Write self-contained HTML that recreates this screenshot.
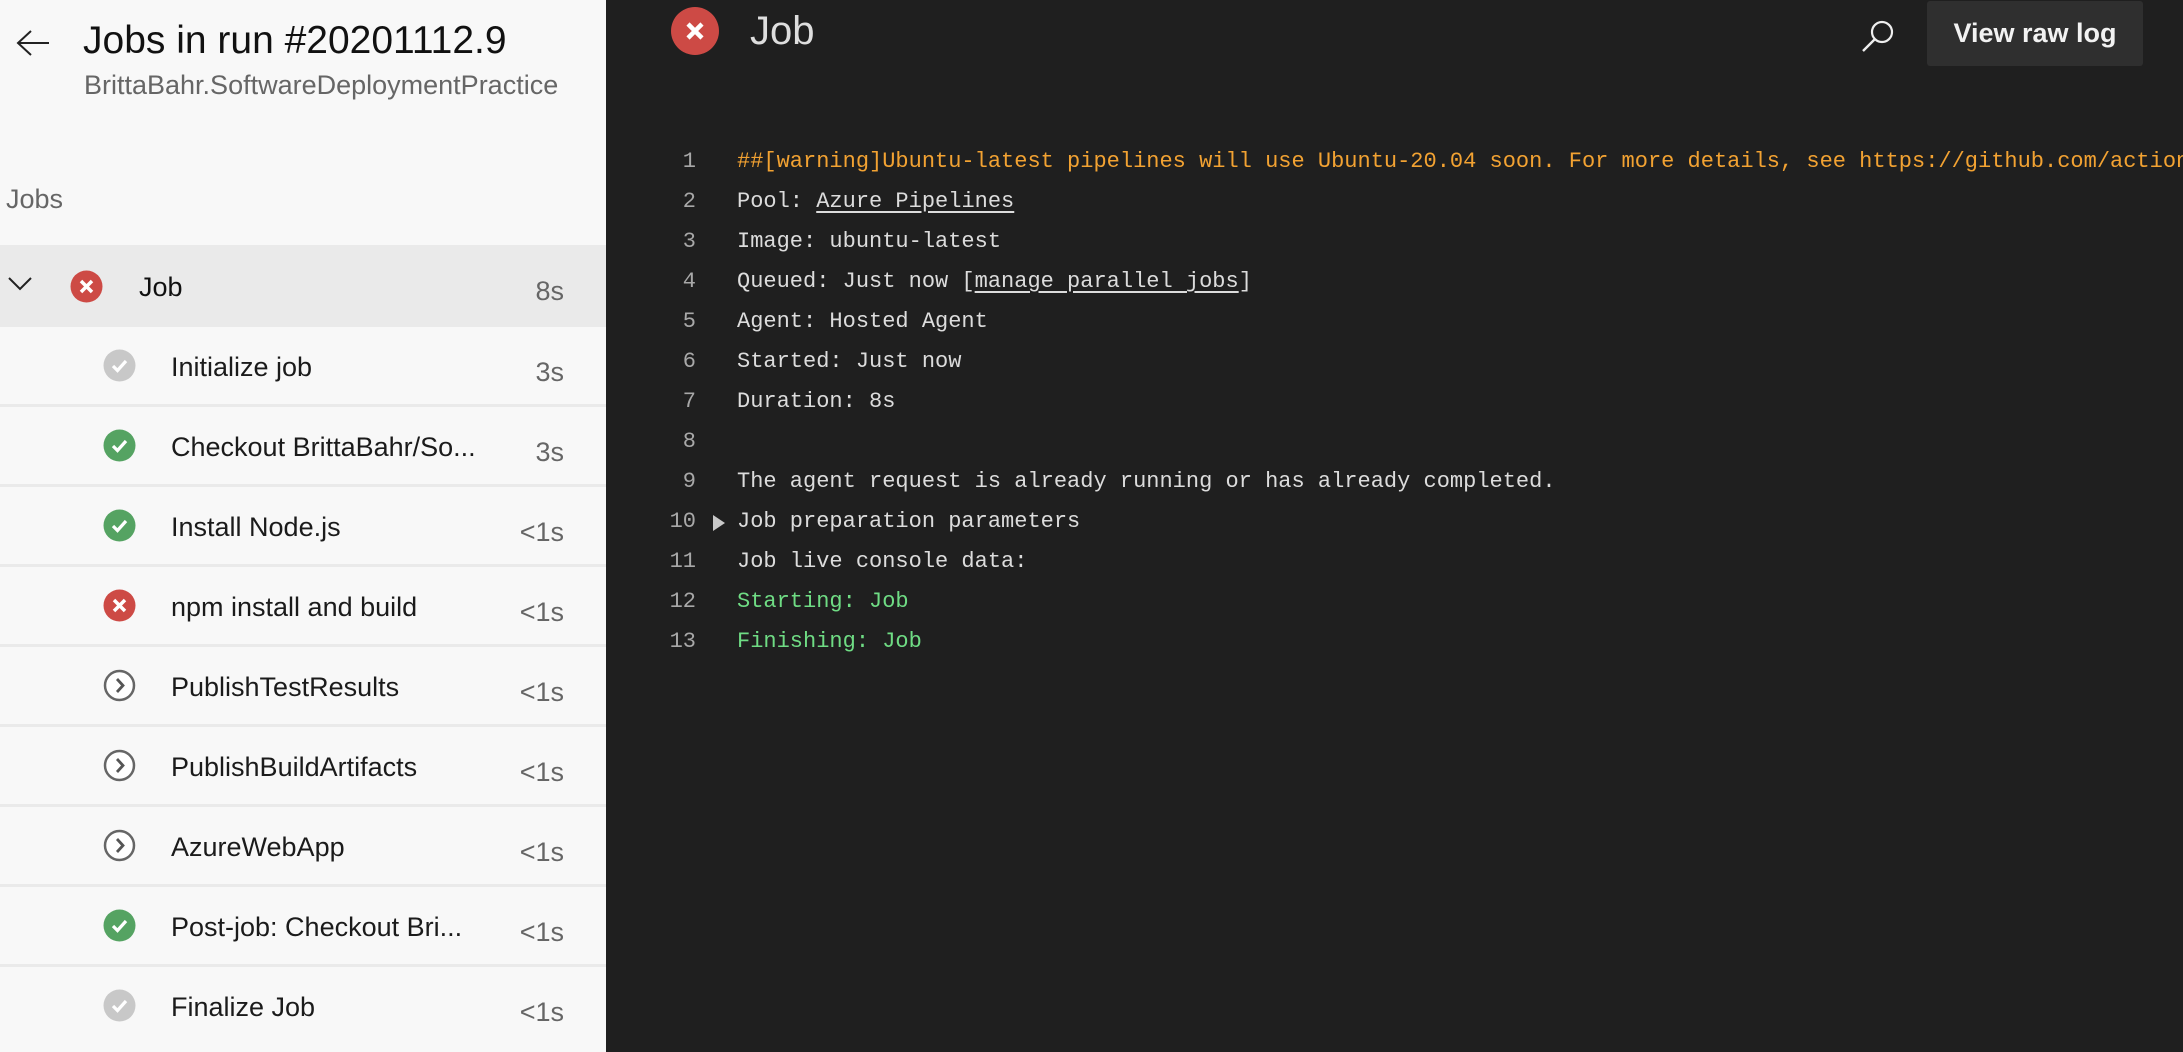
<!DOCTYPE html>
<html><head><meta charset="utf-8"><style>
*{margin:0;padding:0;box-sizing:border-box}
body{width:2183px;height:1052px;overflow:hidden;background:#1f1f1f;font-family:"Liberation Sans",sans-serif;position:relative}
#side{position:absolute;left:0;top:0;width:606px;height:1052px;background:#f8f8f8}
.abs{position:absolute;white-space:nowrap}
.row{position:absolute;left:0;width:606px;height:80px;border-top:3px solid #eaeaea}
.row .t{position:absolute;left:171px;top:25px;font-size:27px;color:#1b1b1b}
.row .d{position:absolute;right:42px;top:30px;font-size:27px;color:#666}
.row svg{position:absolute;left:103px;top:22px}
#main .ln{position:absolute;width:696px;left:0;text-align:right;font-family:"Liberation Mono",monospace;font-size:22px;color:#a8a8a8;padding-right:0}
#main .tx{position:absolute;left:737px;font-family:"Liberation Mono",monospace;font-size:22px;color:#dcdcdc;white-space:nowrap}
.u{text-decoration:underline;text-underline-offset:4px}
</style></head><body>
<div id="side">
<svg class="abs" style="left:15px;top:28px" width="36" height="30" viewBox="0 0 36 30"><path d="M16 3 L3 15 L16 27 M3 15 H34" fill="none" stroke="#222" stroke-width="2"/></svg>
<div class="abs" style="left:83px;top:19px;font-size:39px;color:#111">Jobs in run #20201112.9</div>
<div class="abs" style="left:84px;top:70px;font-size:27px;color:#666">BrittaBahr.SoftwareDeploymentPractice</div>
<div class="abs" style="left:6px;top:184px;font-size:27px;color:#666">Jobs</div>
<div class="abs" style="left:0;top:245px;width:606px;height:82px;background:#eaeaea"></div>
<svg class="abs" style="left:7px;top:275px" width="26" height="16"><path d="M2 3 L13 14 L24 3" fill="none" stroke="#222" stroke-width="2"/></svg>
<svg class="abs" style="left:70px;top:270px" width="33" height="33"><circle cx="16.5" cy="16.5" r="16" fill="#cd4a45"/><path d="M11 11 L22 22 M22 11 L11 22" stroke="#fff" stroke-width="3.5"/></svg>
<div class="abs" style="left:139px;top:272px;font-size:27px;color:#111">Job</div>
<div class="abs" style="right:42px;top:276px;font-size:27px;color:#666">8s</div>

<div class="row" style="top:324px"><svg width="33" height="33"><circle cx="16.5" cy="16.5" r="16" fill="#c8c8c8"/><path d="M10 17 L14.5 21.5 L23 12" fill="none" stroke="#fff" stroke-width="3.2"/></svg><div class="t">Initialize job</div><div class="d">3s</div></div>
<div class="row" style="top:404px"><svg width="33" height="33"><circle cx="16.5" cy="16.5" r="16" fill="#55a362"/><path d="M10 17 L14.5 21.5 L23 12" fill="none" stroke="#fff" stroke-width="3.2"/></svg><div class="t">Checkout BrittaBahr/So...</div><div class="d">3s</div></div>
<div class="row" style="top:484px"><svg width="33" height="33"><circle cx="16.5" cy="16.5" r="16" fill="#55a362"/><path d="M10 17 L14.5 21.5 L23 12" fill="none" stroke="#fff" stroke-width="3.2"/></svg><div class="t">Install Node.js</div><div class="d">&lt;1s</div></div>
<div class="row" style="top:564px"><svg width="33" height="33"><circle cx="16.5" cy="16.5" r="16" fill="#cd4a45"/><path d="M11 11 L22 22 M22 11 L11 22" stroke="#fff" stroke-width="3.5"/></svg><div class="t">npm install and build</div><div class="d">&lt;1s</div></div>
<div class="row" style="top:644px"><svg width="33" height="33"><circle cx="16.5" cy="16.5" r="14.5" fill="#fff" stroke="#666" stroke-width="2.5"/><path d="M14 10 L20 16.5 L14 23" fill="none" stroke="#555" stroke-width="2.8"/></svg><div class="t">PublishTestResults</div><div class="d">&lt;1s</div></div>
<div class="row" style="top:724px"><svg width="33" height="33"><circle cx="16.5" cy="16.5" r="14.5" fill="#fff" stroke="#666" stroke-width="2.5"/><path d="M14 10 L20 16.5 L14 23" fill="none" stroke="#555" stroke-width="2.8"/></svg><div class="t">PublishBuildArtifacts</div><div class="d">&lt;1s</div></div>
<div class="row" style="top:804px"><svg width="33" height="33"><circle cx="16.5" cy="16.5" r="14.5" fill="#fff" stroke="#666" stroke-width="2.5"/><path d="M14 10 L20 16.5 L14 23" fill="none" stroke="#555" stroke-width="2.8"/></svg><div class="t">AzureWebApp</div><div class="d">&lt;1s</div></div>
<div class="row" style="top:884px"><svg width="33" height="33"><circle cx="16.5" cy="16.5" r="16" fill="#55a362"/><path d="M10 17 L14.5 21.5 L23 12" fill="none" stroke="#fff" stroke-width="3.2"/></svg><div class="t">Post-job: Checkout Bri...</div><div class="d">&lt;1s</div></div>
<div class="row" style="top:964px"><svg width="33" height="33"><circle cx="16.5" cy="16.5" r="16" fill="#c8c8c8"/><path d="M10 17 L14.5 21.5 L23 12" fill="none" stroke="#fff" stroke-width="3.2"/></svg><div class="t">Finalize Job</div><div class="d">&lt;1s</div></div>
</div>

<div id="main">
<svg class="abs" style="left:671px;top:7px" width="48" height="48"><circle cx="24" cy="24" r="24" fill="#cd4a45"/><path d="M17 17 L31 31 M31 17 L17 31" stroke="#fff" stroke-width="4.5"/></svg>
<div class="abs" style="left:750px;top:9px;font-size:40px;color:#dedede">Job</div>
<svg class="abs" style="left:1858px;top:16px" width="40" height="40"><circle cx="24" cy="16" r="10" fill="none" stroke="#eee" stroke-width="2.2"/><path d="M17 23 L5 35" stroke="#eee" stroke-width="2.4"/></svg>
<div class="abs" style="left:1927px;top:1px;width:216px;height:65px;background:#2f2f2f;border-radius:3px;color:#f2f2f2;font-size:27px;font-weight:bold;text-align:center;line-height:65px">View raw log</div>

<div class="ln" style="top:149px">1</div><div class="tx" style="top:149px;color:#f2a232">##[warning]Ubuntu-latest pipelines will use Ubuntu-20.04 soon. For more details, see https://github.com/actions</div>
<div class="ln" style="top:189px">2</div><div class="tx" style="top:189px">Pool: <span class="u">Azure Pipelines</span></div>
<div class="ln" style="top:229px">3</div><div class="tx" style="top:229px">Image: ubuntu-latest</div>
<div class="ln" style="top:269px">4</div><div class="tx" style="top:269px">Queued: Just now [<span class="u">manage parallel jobs</span>]</div>
<div class="ln" style="top:309px">5</div><div class="tx" style="top:309px">Agent: Hosted Agent</div>
<div class="ln" style="top:349px">6</div><div class="tx" style="top:349px">Started: Just now</div>
<div class="ln" style="top:389px">7</div><div class="tx" style="top:389px">Duration: 8s</div>
<div class="ln" style="top:429px">8</div>
<div class="ln" style="top:469px">9</div><div class="tx" style="top:469px">The agent request is already running or has already completed.</div>
<div class="ln" style="top:509px">10</div><svg class="abs" style="left:712px;top:513px" width="14" height="20"><path d="M1 2 L13 10 L1 18 Z" fill="#c8c8c8"/></svg><div class="tx" style="top:509px">Job preparation parameters</div>
<div class="ln" style="top:549px">11</div><div class="tx" style="top:549px">Job live console data:</div>
<div class="ln" style="top:589px">12</div><div class="tx" style="top:589px;color:#6fdc84">Starting: Job</div>
<div class="ln" style="top:629px">13</div><div class="tx" style="top:629px;color:#6fdc84">Finishing: Job</div>
</div>
</body></html>
